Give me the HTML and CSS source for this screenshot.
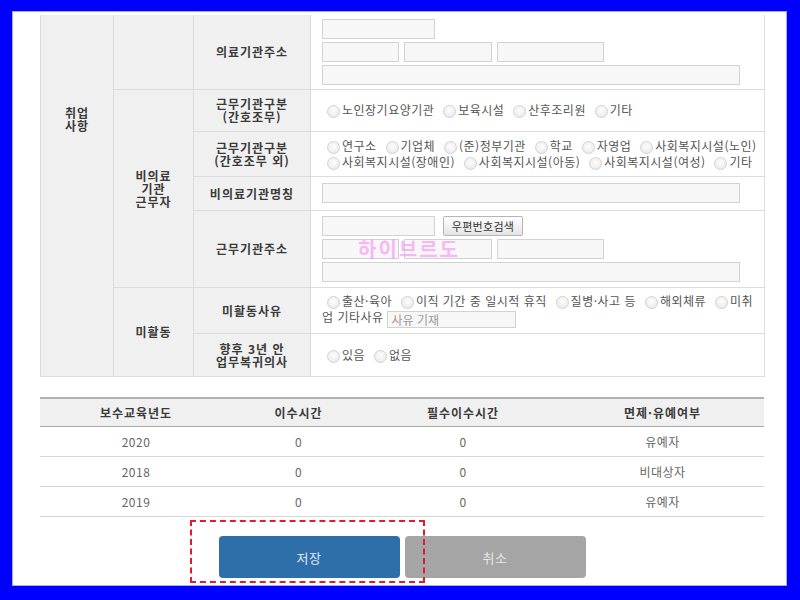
FILE: index.html
```html
<!DOCTYPE html>
<html lang="ko">
<head>
<meta charset="utf-8">
<title>취업사항</title>
<link rel="stylesheet" href="styles.css">
</head>
<body>
<div class="panel">
  <div class="form-wrap">
    <table class="form">
      <colgroup>
        <col class="c1"><col class="c2"><col class="c3"><col class="c4">
      </colgroup>
      <tr class="row-addr">
        <th rowspan="5" class="top-label">취업<br>사항</th>
        <th></th>
        <th>의료기관주소</th>
        <td class="val">
          <div class="line"><input class="inp w-zip" type="text"></div>
          <div class="line"><input class="inp w-a" type="text"><input class="inp w-b" type="text"><input class="inp w-c" type="text"></div>
          <div class="line"><input class="inp w-full" type="text"></div>
        </td>
      </tr>
      <tr class="row-type1">
        <th rowspan="4">비의료<br>기관<br>근무자</th>
        <th>근무기관구분<br>(간호조무)</th>
        <td class="val">
          <label class="opt"><input class="rd" type="radio" name="t1">노인장기요양기관</label>
          <label class="opt"><input class="rd" type="radio" name="t1">보육시설</label>
          <label class="opt"><input class="rd" type="radio" name="t1">산후조리원</label>
          <label class="opt"><input class="rd" type="radio" name="t1">기타</label>
        </td>
      </tr>
      <tr class="row-type2">
        <th>근무기관구분<br>(간호조무 외)</th>
        <td class="val">
          <label class="opt"><input class="rd" type="radio" name="t2">연구소</label>
          <label class="opt"><input class="rd" type="radio" name="t2">기업체</label>
          <label class="opt"><input class="rd" type="radio" name="t2">(준)정부기관</label>
          <label class="opt"><input class="rd" type="radio" name="t2">학교</label>
          <label class="opt"><input class="rd" type="radio" name="t2">자영업</label>
          <label class="opt"><input class="rd" type="radio" name="t2">사회복지시설(노인)</label>
          <label class="opt"><input class="rd" type="radio" name="t2">사회복지시설(장애인)</label>
          <label class="opt"><input class="rd" type="radio" name="t2">사회복지시설(아동)</label>
          <label class="opt"><input class="rd" type="radio" name="t2">사회복지시설(여성)</label>
          <label class="opt"><input class="rd" type="radio" name="t2">기타</label>
        </td>
      </tr>
      <tr class="row-name">
        <th>비의료기관명칭</th>
        <td class="val"><div class="line"><input class="inp w-full" type="text"></div></td>
      </tr>
      <tr class="row-waddr">
        <th>근무기관주소</th>
        <td class="val">
          <div class="line"><input class="inp w-zip" type="text"><button class="btn-zip" type="button">우편번호검색</button></div>
          <div class="line"><input class="inp w-a" type="text"><input class="inp w-b" type="text"><input class="inp w-c" type="text"></div>
          <div class="line"><input class="inp w-full" type="text"></div>
        </td>
      </tr>
      <tr class="row-reason">
        <th rowspan="2" class="inactive-label"></th>
        <th rowspan="2">미활동</th>
        <th>미활동사유</th>
        <td class="val reason">
          <label class="opt"><input class="rd" type="radio" name="t3">출산·육아</label>
          <label class="opt"><input class="rd" type="radio" name="t3">이직 기간 중 일시적 휴직</label>
          <label class="opt"><input class="rd" type="radio" name="t3">질병·사고 등</label>
          <label class="opt"><input class="rd" type="radio" name="t3">해외체류</label>
          <label class="opt"><input class="rd" type="radio" name="t3">미취업 기타사유</label> <input class="inp w-reason" type="text" placeholder="사유 기재">
        </td>
      </tr>
      <tr class="row-return">
        <th>향후 3년 안<br>업무복귀의사</th>
        <td class="val">
          <label class="opt"><input class="rd" type="radio" name="t4">있음</label>
          <label class="opt"><input class="rd" type="radio" name="t4">없음</label>
        </td>
      </tr>
    </table>
    <div class="watermark">하이브르도</div>
  </div>

  <table class="edu">
    <colgroup>
      <col class="e1"><col class="e2"><col class="e3"><col class="e4">
    </colgroup>
    <thead>
      <tr><th>보수교육년도</th><th>이수시간</th><th>필수이수시간</th><th>면제·유예여부</th></tr>
    </thead>
    <tbody>
      <tr><td>2020</td><td>0</td><td>0</td><td>유예자</td></tr>
      <tr><td>2018</td><td>0</td><td>0</td><td>비대상자</td></tr>
      <tr><td>2019</td><td>0</td><td>0</td><td>유예자</td></tr>
    </tbody>
  </table>

  <div class="actions">
    <button class="btn btn-save" type="button">저장</button>
    <button class="btn btn-cancel" type="button">취소</button>
    <div class="highlight"></div>
  </div>
</div>
</body>
</html>
```
FILE: styles.css
```css
* { box-sizing: border-box; }
html, body { margin: 0; height: 100%; }
body {
  background: #0000fe;
  font-family: "Noto Sans CJK KR", "Noto Sans", sans-serif;
  font-size: 12px;
  color: #555;
  padding: 11px 0 0 12px;
  overflow: hidden;
}
.panel {
  width: 775px;
  height: 575px;
  background: #fff;
  border: 1px solid #a8a8ff;
  padding: 3px 22px 0 27px;
  position: relative;
  overflow: hidden;
}
.form-wrap { position: relative; }

/* form table */
.form {
  width: 724px;
  border-collapse: collapse;
  table-layout: fixed;
}
.form .c1 { width: 73px; }
.form .c2 { width: 80px; }
.form .c3 { width: 117px; }
.form .c4 { width: 454px; }
.form th, .form td {
  border: 1px solid #dcdcdc;
  padding: 0;
}
.form tr:first-child th, .form tr:first-child td { border-top: none; }
.form th {
  background: #f0f0f0;
  font-weight: bold;
  color: #3a3a3a;
  text-align: center;
  line-height: 13px;
  letter-spacing: 1px;
  vertical-align: middle;
}
.form th.top-label { vertical-align: top; padding-top: 91px; border-bottom: none; }
.form th.inactive-label { border-top: none; }
.form td.val {
  padding: 0 4px 0 11px;
  line-height: 16px;
  letter-spacing: 0.5px;
  vertical-align: middle;
  color: #555;
}
.form td.reason { padding-right: 10px; }
.row-addr { height: 74px; }
.row-type1 { height: 42px; }
.row-type2 { height: 45px; }
.row-name { height: 34px; }
.row-waddr { height: 77px; }
.row-reason { height: 46px; }
.row-return { height: 43px; }

.line { display: flex; gap: 5px; }
.line + .line { margin-top: 3px; }
.inp {
  display: block;
  height: 20px;
  border: 1px solid #d2d2d2;
  background: #f7f7f7;
  padding: 0 3px;
  font: inherit;
  color: #555;
  margin: 0;
  border-radius: 0;
}
.w-zip { width: 113px; }
.w-a { width: 77px; }
.w-b { width: 88px; }
.w-c { width: 107px; }
.w-full { width: 418px; }
.w-reason {
  display: inline-block;
  width: 129px;
  height: 17px;
  vertical-align: -3px;
  font-size: 12px;
}
.w-reason::placeholder { color: #999; }
.btn-zip {
  height: 20px;
  width: 80px;
  margin-left: 3px;
  padding: 0;
  border: 1px solid #b5b5b5;
  border-radius: 2px;
  background: linear-gradient(#ffffff, #e4e4e4);
  font-family: inherit;
  font-size: 11px;
  letter-spacing: 0.3px;
  color: #333;
}

.rd {
  appearance: none;
  -webkit-appearance: none;
  width: 13px;
  height: 13px;
  border: 1px solid #d3d3d3;
  border-radius: 50%;
  background: radial-gradient(circle at 50% 40%, #fdfdfd 0, #ededed 70%, #e4e4e4 100%);
  margin: 0 2px 0 5px;
  vertical-align: -3px;
}

.watermark {
  position: absolute;
  left: 318px;
  top: 222px;
  font-size: 20px;
  font-weight: bold;
  line-height: 24px;
  letter-spacing: 2px;
  color: rgba(250, 120, 238, 0.5);
  pointer-events: none;
}

/* education table */
.edu {
  width: 724px;
  margin-top: 20px;
  border-collapse: collapse;
  table-layout: fixed;
  border-top: 2px solid #b2b2b2;
}
.edu .e1 { width: 192px; }
.edu .e2 { width: 133px; }
.edu .e3 { width: 196px; }
.edu .e4 { width: 203px; }
.edu th {
  background: #f0f0f0;
  height: 29px;
  border-bottom: 1px solid #a9a9a9;
  font-weight: bold;
  color: #3a3a3a;
  letter-spacing: 1px;
  padding: 0;
}
.edu td {
  height: 30px;
  border-bottom: 1px solid #d6d6d6;
  text-align: center;
  color: #666;
  letter-spacing: 0.5px;
  padding: 0;
}

/* actions */
.actions {
  position: relative;
  display: flex;
  justify-content: center;
  gap: 5px;
  padding-top: 19px;
}
.btn {
  width: 181px;
  height: 42px;
  border: none;
  border-radius: 4px;
  font-family: inherit;
  font-size: 13px;
  letter-spacing: 0.5px;
}
.btn-save { background: #2e6ea9; color: #e2eaf3; }
.btn-cancel { background: #a5a5a5; color: #e6e6e6; }
.highlight {
  position: absolute;
  left: 150px;
  top: 3px;
  width: 235px;
  height: 63px;
  border: 2px dashed #e8192c;
  pointer-events: none;
}
```
